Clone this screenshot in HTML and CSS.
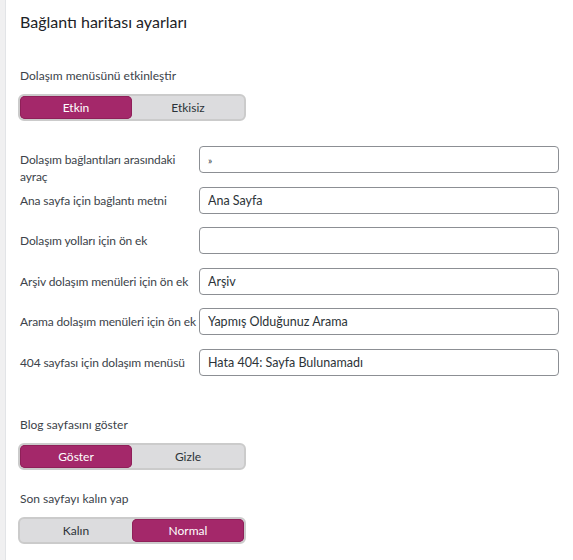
FILE: index.html
```html
<!DOCTYPE html>
<html lang="tr">
<head>
  <meta charset="utf-8">
  <title>Bağlantı haritası ayarları</title>
  <link rel="stylesheet" href="styles.css">
</head>
<body>

  <div class="panel">
    <h2 class="panel-title">Bağlantı haritası ayarları</h2>

    <!-- Enable breadcrumbs -->
    <div class="field-title">Dolaşım menüsünü etkinleştir</div>
    <div class="switch">
      <span class="switch-option active">Etkin</span>
      <span class="switch-option">Etkisiz</span>
    </div>

    <!-- Text fields -->
    <div class="text-fields">
      <div class="text-row">
        <label for="sep">Dolaşım bağlantıları arasındaki<br>ayraç</label>
        <input type="text" id="sep" value="»" class="small-text">
      </div>
      <div class="text-row">
        <label for="home">Ana sayfa için bağlantı metni</label>
        <input type="text" id="home" value="Ana Sayfa">
      </div>
      <div class="text-row">
        <label for="prefix">Dolaşım yolları için ön ek</label>
        <input type="text" id="prefix" value="">
      </div>
      <div class="text-row">
        <label for="archive">Arşiv dolaşım menüleri için ön ek</label>
        <input type="text" id="archive" value="Arşiv">
      </div>
      <div class="text-row">
        <label for="search">Arama dolaşım menüleri için ön ek</label>
        <input type="text" id="search" value="Yapmış Olduğunuz Arama">
      </div>
      <div class="text-row">
        <label for="404">404 sayfası için dolaşım menüsü</label>
        <input type="text" id="404" value="Hata 404: Sayfa Bulunamadı">
      </div>
    </div>

    <!-- Blog page -->
    <div class="field-title spaced">Blog sayfasını göster</div>
    <div class="switch">
      <span class="switch-option active">Göster</span>
      <span class="switch-option">Gizle</span>
    </div>

    <!-- Bold last page -->
    <div class="field-title near">Son sayfayı kalın yap</div>
    <div class="switch">
      <span class="switch-option">Kalın</span>
      <span class="switch-option active">Normal</span>
    </div>
  </div>

</body>
</html>
```

FILE: styles.css
```css
body {
  margin: 0;
  background: #f0f0f1;
  font-family: Lato, "Open Sans", sans-serif;
  color: #3c434a;
}

.panel {
  margin-left: 5px;
  min-height: 560px;
  box-sizing: border-box;
  padding: 12px 14px 0 14px;
  background: #fff;
  border-left: 1px solid #e2e4e7;
}

.panel-title {
  margin: 0;
  font-size: 16px;
  line-height: 20px;
  font-weight: 400;
  color: #1d2327;
}

.field-title {
  margin-top: 35px;
  font-size: 12px;
  line-height: 17px;
}

.field-title.spaced {
  margin-top: 27px;
}

.field-title.near {
  margin-top: 20px;
}

.switch {
  display: flex;
  width: 224px;
  height: 23px;
  margin-top: 10px;
  margin-left: -2px;
  border: 2px solid #cbcbcb;
  border-radius: 6px;
  background: #dcdcde;
}

.switch-option {
  flex: 1;
  display: flex;
  align-items: center;
  justify-content: center;
  font-size: 12px;
  color: #2c3338;
  border-radius: 5px;
}

.switch-option.active {
  background: #a4286a;
  color: #fff;
  box-shadow: inset 0 0 0 1px #8f2059;
}

.text-fields {
  margin-top: 25px;
}

.text-row {
  display: flex;
  align-items: flex-start;
  height: 40.5px;
}

.text-row label {
  width: 179px;
  flex-shrink: 0;
  padding-top: 5px;
  font-size: 12px;
  line-height: 17px;
  letter-spacing: -0.12px;
  white-space: nowrap;
}

.text-row input {
  width: 360px;
  height: 27px;
  box-sizing: border-box;
  margin: 0;
  padding: 0 8px;
  border: 1px solid #8c8f94;
  border-radius: 4px;
  font-family: inherit;
  font-size: 12.5px;
  color: #2c3338;
  background: #fff;
}

.text-row input.small-text {
  font-size: 10px;
}
```
